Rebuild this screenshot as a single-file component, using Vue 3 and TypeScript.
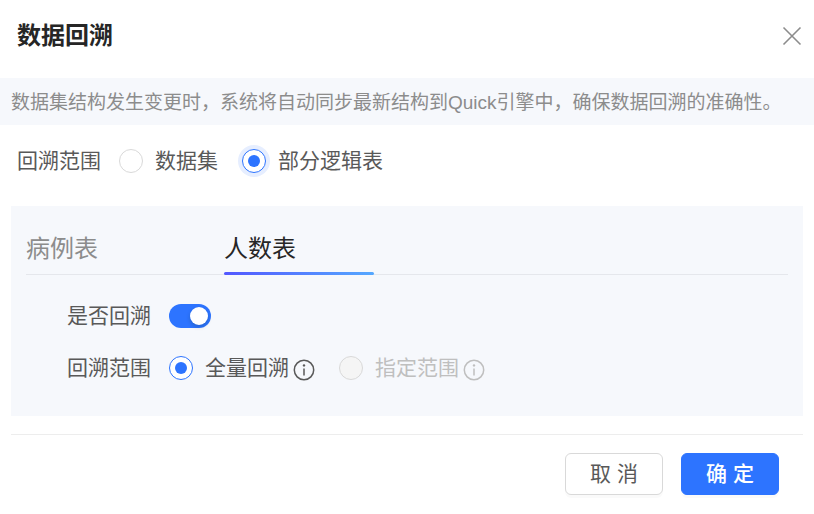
<script setup lang="ts">
import { ref } from 'vue'

type Scope = 'dataset' | 'tables'
type Range = 'full' | 'custom'

const tabs: string[] = ['病例表', '人数表']
const scope = ref<Scope>('tables')
const activeTab = ref<string>('人数表')
const enabled = ref<boolean>(true)
const range = ref<Range>('full')
</script>

<template>
  <section class="dialog" role="dialog" aria-labelledby="dialog-title">
    <header class="header">
      <h1 id="dialog-title" class="title">数据回溯</h1>
      <button type="button" class="close" aria-label="关闭">
        <svg viewBox="0 0 20 20" width="20" height="20" aria-hidden="true">
          <path d="M1.5 1.5 18.5 18.5M18.5 1.5 1.5 18.5" />
        </svg>
      </button>
    </header>

    <p class="notice">数据集结构发生变更时，系统将自动同步最新结构到Quick引擎中，确保数据回溯的准确性。</p>

    <div class="row scope" role="radiogroup" aria-labelledby="scope-label">
      <span id="scope-label" class="label">回溯范围</span>
      <label class="option">
        <input v-model="scope" type="radio" name="scope" value="dataset" class="radio" />
        <span>数据集</span>
      </label>
      <label class="option">
        <input v-model="scope" type="radio" name="scope" value="tables" class="radio halo" />
        <span>部分逻辑表</span>
      </label>
    </div>

    <div class="panel">
      <div class="tabs" role="tablist">
        <button
          v-for="tab in tabs"
          :key="tab"
          type="button"
          role="tab"
          class="tab"
          :class="{ active: tab === activeTab }"
          :aria-selected="tab === activeTab"
          @click="activeTab = tab"
        >{{ tab }}</button>
      </div>

      <div class="fields">
        <div class="row">
          <label class="label" for="enabled">是否回溯</label>
          <input id="enabled" v-model="enabled" type="checkbox" role="switch" class="switch" />
        </div>
        <div class="row" role="radiogroup" aria-labelledby="range-label">
          <span id="range-label" class="label">回溯范围</span>
          <label class="option">
            <input v-model="range" type="radio" name="range" value="full" class="radio" />
            <span class="with-info">全量回溯<svg class="info" viewBox="0 0 22 22" width="22" height="22" aria-hidden="true">
              <circle cx="11" cy="11" r="9.7" />
              <path d="M11 9.5V16.5" />
              <circle class="dot" cx="11" cy="6.4" r="1.2" />
            </svg></span>
          </label>
          <label class="option disabled">
            <input v-model="range" type="radio" name="range" value="custom" class="radio" disabled />
            <span class="with-info">指定范围<svg class="info" viewBox="0 0 22 22" width="22" height="22" aria-hidden="true">
              <circle cx="11" cy="11" r="9.7" />
              <path d="M11 9.5V16.5" />
              <circle class="dot" cx="11" cy="6.4" r="1.2" />
            </svg></span>
          </label>
        </div>
      </div>
    </div>

    <footer class="footer">
      <button type="button" class="button">取 消</button>
      <button type="button" class="button primary">确 定</button>
    </footer>
  </section>
</template>

<style>
body {
  margin: 0;
  background: #fff;
}
</style>

<style scoped>
.dialog {
  font-family: "Liberation Sans", "Noto Sans CJK SC", sans-serif;
  font-size: 21px;
  line-height: 32px;
  color: #595959;
}

button {
  font-family: inherit;
  cursor: pointer;
}

.header {
  display: flex;
  align-items: center;
  justify-content: space-between;
  padding: 18px 12px 24px 17px;
}

.title {
  margin: 0;
  font-size: 24px;
  line-height: 36px;
  font-weight: 700;
  color: #262626;
}

.close {
  display: flex;
  padding: 0;
  border: 0;
  background: none;
}

.close svg {
  fill: none;
  stroke: #8c8c8c;
  stroke-width: 1.6;
}

.notice {
  margin: 0;
  padding: 9px 11px 6px;
  background: #f6f8fc;
  font-size: 19px;
  color: #8c8c8c;
}

.row {
  display: flex;
  align-items: center;
}

.label {
  margin-right: 18px;
}

.scope {
  padding: 20px 17px 29px;
}

.option {
  display: flex;
  align-items: center;
  gap: 12px;
  margin-right: 24px;
}

.radio {
  appearance: none;
  display: grid;
  place-items: center;
  box-sizing: border-box;
  flex: none;
  width: 24px;
  height: 24px;
  margin: 0;
  border: 1px solid #d9d9d9;
  border-radius: 50%;
  background: #fff;
}

.radio:checked {
  border-color: #2d74ff;
}

.radio:checked::before {
  content: "";
  width: 12px;
  height: 12px;
  border-radius: 50%;
  background: #2d74ff;
}

.radio.halo:checked {
  box-shadow: 0 0 0 4px #e6eeff;
}

.radio:disabled {
  background: #f5f5f5;
}

.disabled {
  color: #bfbfbf;
}

.with-info {
  display: flex;
  align-items: center;
  gap: 4px;
}

.info {
  margin-top: 4px;
  fill: none;
  stroke: currentColor;
  stroke-width: 1.5;
}

.info .dot {
  fill: currentColor;
  stroke: none;
}

.panel {
  margin: 0 11px;
  padding: 25px 15px 32px;
  background: #f6f8fc;
}

.tabs {
  display: flex;
  gap: 48px;
  box-shadow: inset 0 -1px #e5e7ec;
}

.tab {
  width: 150px;
  padding: 0;
  border: 0;
  background: none;
  font-size: 24px;
  line-height: 36px;
  text-align: left;
  color: #8c8c8c;
}

.tab::after {
  content: "";
  display: block;
  height: 3px;
  margin-top: 5px;
  border-radius: 2px;
}

.tab.active {
  color: #262626;
}

.tab.active::after {
  background: linear-gradient(90deg, #5257ff, #55a8ff);
}

.fields {
  display: grid;
  gap: 20px;
  padding: 25px 0 0 41px;
}

.switch {
  appearance: none;
  display: flex;
  align-items: center;
  box-sizing: border-box;
  width: 42px;
  height: 24px;
  margin: 0;
  padding: 3px;
  border-radius: 12px;
  background: #bfbfbf;
}

.switch::before {
  content: "";
  width: 18px;
  height: 18px;
  border-radius: 50%;
  background: #fff;
  box-shadow: 0 2px 4px rgba(0, 35, 11, 0.2);
}

.switch:checked {
  justify-content: flex-end;
  background: #2d74ff;
}

.footer {
  display: flex;
  justify-content: flex-end;
  gap: 18px;
  margin: 18px 11px 0;
  padding: 18px 24px;
  border-top: 1px solid #ededed;
}

.button {
  box-sizing: border-box;
  width: 98px;
  height: 42px;
  padding: 0;
  border: 1px solid #d9d9d9;
  border-radius: 6px;
  background: #fff;
  box-shadow: 0 3px 0 rgba(0, 0, 0, 0.02);
  font-size: 21px;
  line-height: 32px;
  color: #595959;
}

.button.primary {
  border-color: #2d74ff;
  background: #2d74ff;
  color: #fff;
  font-weight: 500;
}
</style>
